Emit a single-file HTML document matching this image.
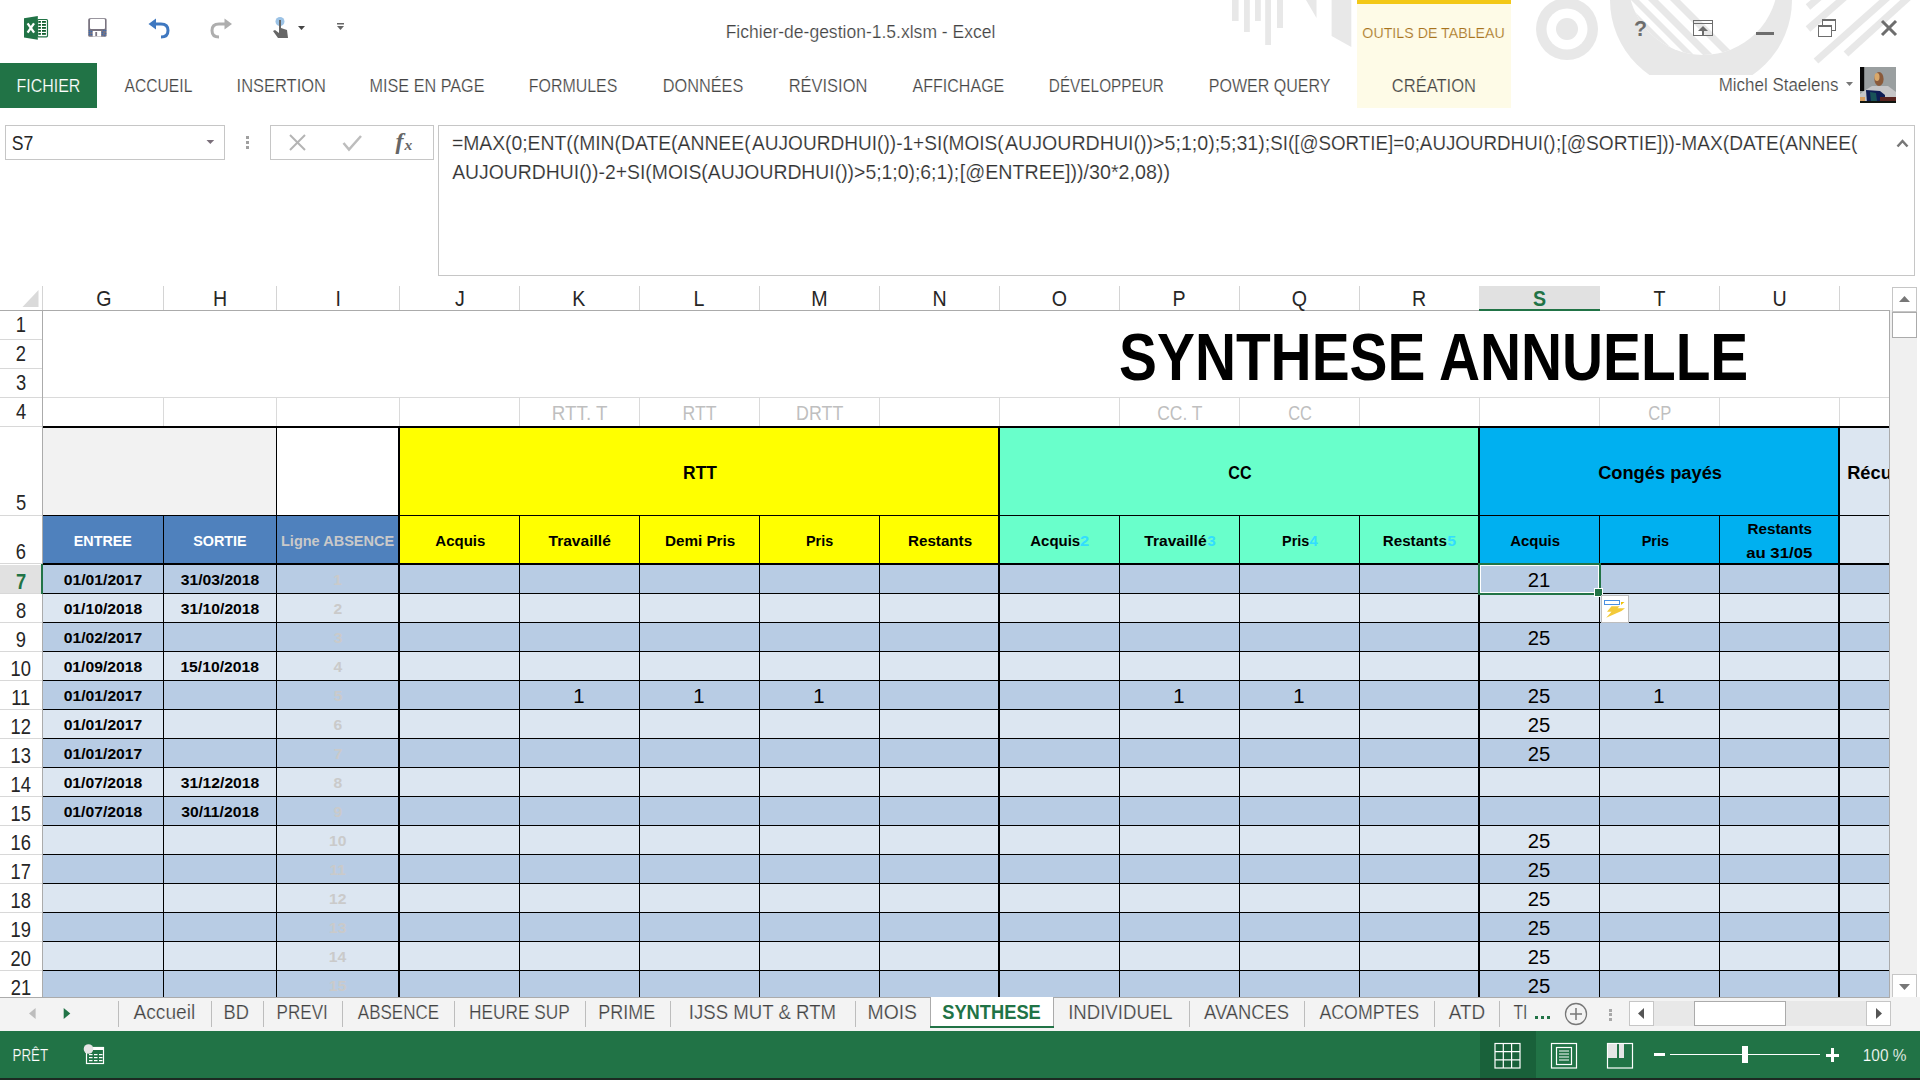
<!DOCTYPE html>
<html lang="fr"><head><meta charset="utf-8"><title>Fichier-de-gestion-1.5.xlsm - Excel</title>
<style>
html,body{margin:0;padding:0;background:#fff;}
body{width:1920px;height:1080px;overflow:hidden;position:relative;font-family:"Liberation Sans",sans-serif;}
svg{position:absolute;left:0;top:0;display:block}
</style></head>
<body>
<svg width="1920" height="1080" viewBox="0 0 1920 1080">
<rect x="1232" y="0" width="6.6" height="21" fill="#E8E8E8"/>
<rect x="1244" y="0" width="5.8" height="32" fill="#E8E8E8"/>
<rect x="1255" y="0" width="5.8" height="21" fill="#E8E8E8"/>
<rect x="1265.2" y="0" width="5.8" height="45" fill="#E8E8E8"/>
<rect x="1277" y="0" width="6.0" height="28" fill="#E8E8E8"/>
<polygon points="1306,0 1316.5,0 1316.5,18" fill="#E8E8E8"/>
<polygon points="1331.6,0 1351.3,0 1351.3,47 1331.6,36" fill="#E8E8E8"/>
<circle cx="1567" cy="29" r="31" fill="#E8E8E8"/><circle cx="1567" cy="29" r="20.5" fill="#fff"/><circle cx="1567" cy="29" r="11" fill="#E8E8E8"/>
<clipPath id="cl75"><rect x="0" y="0" width="1920" height="75"/></clipPath>
<clipPath id="inner"><circle cx="1703" cy="-20" r="75"/></clipPath>
<g clip-path="url(#cl75)"><circle cx="1701" cy="0" r="91" fill="#E8E8E8"/><circle cx="1703" cy="-20" r="75" fill="#fff"/><g clip-path="url(#inner)"><polygon points="1300,-100 1523,-100 1723,100 1500,100" fill="#E8E8E8"/><polygon points="1531,-100 1539,-100 1739,100 1731,100" fill="#E8E8E8"/><polygon points="1548,-100 1558,-100 1758,100 1748,100" fill="#E8E8E8"/><polygon points="1570,-100 1580,-100 1780,100 1770,100" fill="#E8E8E8"/></g></g>
<g stroke="#E8E8E8" stroke-width="7"><line x1="1808" y1="7" x2="1822" y2="-5"/><line x1="1808" y1="29" x2="1846" y2="-4"/><line x1="1816" y1="61" x2="1888" y2="-3"/><line x1="1846" y1="54" x2="1910" y2="-4"/></g>
<rect x="1357" y="0" width="154" height="108" fill="#FEFBE7" shape-rendering="crispEdges" />
<rect x="1357" y="0" width="154" height="4" fill="#F3C817" shape-rendering="crispEdges" />
<rect x="0" y="63" width="97" height="45" fill="#217346" shape-rendering="crispEdges" />
<g><rect x="1860" y="67" width="36" height="36" fill="#9A9FA0"/><rect x="1860" y="67" width="4.2" height="24" fill="#080808"/><path d="M1864 91 L1872 86 L1888 86 L1896 92 L1896 103 L1860 103 L1860 94 Z" fill="#C6C6C8"/><ellipse cx="1879" cy="79" rx="4.6" ry="7" fill="#8A5A3A"/><ellipse cx="1877" cy="77" rx="2.5" ry="4" fill="#D9A86A"/><polygon points="1866,90 1880,91 1885,95 1885,103 1867,103" fill="#0E1D55"/><polygon points="1870,92 1876,93 1877,101 1871,101" fill="#1C6A5A" opacity="0.7"/><rect x="1880" y="97" width="16" height="6" fill="#5A2420"/><rect x="1860" y="97" width="5" height="4" fill="#D9A060"/><rect x="1860" y="101" width="36" height="2" fill="#101510"/></g>
<polygon points="1846,82 1853,82 1849.5,86" fill="#777"/>
<text x="1634" y="36" font-size="22.5" font-weight="bold" fill="#6D6D6D" transform="translate(1634 0) scale(0.95 1) translate(-1634 0)">?</text>
<g fill="none" stroke="#6D6D6D" stroke-width="1"><rect x="1693.5" y="20.5" width="19" height="15"/><line x1="1693.5" y1="23.5" x2="1712.5" y2="23.5"/></g><g fill="#6D6D6D"><rect x="1702" y="27" width="2" height="9"/><polygon points="1698,31 1703,26 1708,31"/></g>
<rect x="1756" y="32" width="18" height="3" fill="#6D6D6D" shape-rendering="crispEdges" />
<g fill="none" stroke="#6D6D6D" stroke-width="1"><rect x="1822.5" y="19.5" width="13" height="11"/><rect x="1818.5" y="25.5" width="13" height="11" fill="#fff"/></g><rect x="1822" y="19" width="14" height="2" fill="#6D6D6D"/><rect x="1818" y="25" width="14" height="2" fill="#6D6D6D"/>
<g stroke="#6D6D6D" stroke-width="3"><line x1="1882" y1="21" x2="1896" y2="35"/><line x1="1896" y1="21" x2="1882" y2="35"/></g>
<g><rect x="37.5" y="19.5" width="10" height="17.3" rx="1" fill="#fff" stroke="#217346" stroke-width="1.2"/><rect x="38.3" y="21" width="2.6" height="1.8" fill="#0E5C2C"/><rect x="42" y="21" width="3.9" height="1.8" fill="#0E5C2C"/><rect x="38.3" y="24" width="2.6" height="1.8" fill="#0E5C2C"/><rect x="42" y="24" width="3.9" height="1.8" fill="#0E5C2C"/><rect x="38.3" y="27" width="2.6" height="1.8" fill="#0E5C2C"/><rect x="42" y="27" width="3.9" height="1.8" fill="#0E5C2C"/><rect x="38.3" y="30" width="2.6" height="1.8" fill="#0E5C2C"/><rect x="42" y="30" width="3.9" height="1.8" fill="#0E5C2C"/><rect x="38.3" y="33" width="2.6" height="1.8" fill="#0E5C2C"/><rect x="42" y="33" width="3.9" height="1.8" fill="#0E5C2C"/><polygon points="24,18.2 37.8,16 37.8,39.7 24,37.5" fill="#217346"/><path d="M27.6 23.4 L34.1 32.7 M34 23.4 L27.6 32.7" stroke="#fff" stroke-width="2.3"/></g>
<g><rect x="88.2" y="18.2" width="18.4" height="18.6" rx="1.5" fill="#7A7480"/><rect x="90" y="19" width="15" height="10" rx="1" fill="#fff"/><rect x="92.7" y="31" width="8.4" height="5.5" fill="#fff"/><rect x="95.3" y="32" width="1.8" height="4" fill="#7A7480"/><circle cx="89.5" cy="30.5" r="0.8" fill="#3A6AB0"/><circle cx="89.5" cy="32.5" r="0.8" fill="#3A6AB0"/><circle cx="89.5" cy="34.5" r="0.8" fill="#3A6AB0"/><circle cx="91.5" cy="31.5" r="0.8" fill="#3A6AB0"/><circle cx="91.5" cy="34.5" r="0.8" fill="#3A6AB0"/><circle cx="103.5" cy="30.5" r="0.8" fill="#3A6AB0"/><circle cx="105.5" cy="30.5" r="0.8" fill="#3A6AB0"/><circle cx="102.5" cy="32.5" r="0.8" fill="#3A6AB0"/><circle cx="102.5" cy="34.5" r="0.8" fill="#3A6AB0"/><circle cx="105.5" cy="33.5" r="0.8" fill="#3A6AB0"/><circle cx="104.5" cy="35.5" r="0.8" fill="#3A6AB0"/></g>
<g fill="none" stroke="#3F78C0" stroke-width="3"><path d="M152 24 L161 24 Q168 24 168 30.5 Q168 37 161 37"/></g><polygon points="148.5,24 156,18.5 156,29.5" fill="#3F78C0"/>
<g fill="none" stroke="#AEAEAE" stroke-width="3"><path d="M228 24 L219 24 Q212 24 212 30.5 Q212 37 219 37"/></g><polygon points="232,24 224.5,18.5 224.5,29.5" fill="#AEAEAE"/>
<circle cx="280" cy="21.5" r="4.5" fill="#9CC3E6"/><path d="M279 20 L281 20 L281 28 L287 30 L288 38 L278 38 L273 31 L275 30 L279 33 Z" fill="#666"/><polygon points="298,26 305,26 301.5,30" fill="#444"/>
<rect x="337" y="23" width="7" height="1.5" fill="#666"/><polygon points="337,26 344,26 340.5,30" fill="#666"/>
<rect x="5.5" y="125.5" width="219" height="34" fill="#fff" stroke="#C6C6C6"/>
<polygon points="206.5,140 214.2,140 210.3,144" fill="#7A6F7A"/>
<rect x="245.8" y="136" width="3" height="3" fill="#A0A0A0" shape-rendering="crispEdges" />
<rect x="245.8" y="141" width="3" height="3" fill="#A0A0A0" shape-rendering="crispEdges" />
<rect x="245.8" y="146" width="3" height="3" fill="#A0A0A0" shape-rendering="crispEdges" />
<rect x="270.5" y="125.5" width="163" height="34" fill="#fff" stroke="#C6C6C6"/>
<g stroke="#B4B4B4" stroke-width="2"><line x1="290" y1="135" x2="305" y2="150"/><line x1="305" y1="135" x2="290" y2="150"/></g>
<path d="M343.5 143 L349 149.5 L361 136" fill="none" stroke="#BDBDBD" stroke-width="2.5"/>
<text x="395.5" y="149" font-family="Liberation Serif" font-style="italic" font-weight="bold" font-size="24" fill="#666">f</text><text x="404.5" y="150" font-family="Liberation Serif" font-style="italic" font-weight="bold" font-size="15.5" fill="#666">x</text>
<rect x="438.5" y="125.5" width="1476" height="150" fill="#fff" stroke="#C6C6C6"/>
<path d="M1897.5 146.5 L1902.5 141 L1907.5 146.5" fill="none" stroke="#777" stroke-width="2.5"/>
<rect x="42" y="286" width="1" height="24" fill="#D4D4D4" shape-rendering="crispEdges" />
<rect x="163" y="286" width="1" height="24" fill="#D4D4D4" shape-rendering="crispEdges" />
<rect x="276" y="286" width="1" height="24" fill="#D4D4D4" shape-rendering="crispEdges" />
<rect x="399" y="286" width="1" height="24" fill="#D4D4D4" shape-rendering="crispEdges" />
<rect x="519" y="286" width="1" height="24" fill="#D4D4D4" shape-rendering="crispEdges" />
<rect x="639" y="286" width="1" height="24" fill="#D4D4D4" shape-rendering="crispEdges" />
<rect x="759" y="286" width="1" height="24" fill="#D4D4D4" shape-rendering="crispEdges" />
<rect x="879" y="286" width="1" height="24" fill="#D4D4D4" shape-rendering="crispEdges" />
<rect x="999" y="286" width="1" height="24" fill="#D4D4D4" shape-rendering="crispEdges" />
<rect x="1119" y="286" width="1" height="24" fill="#D4D4D4" shape-rendering="crispEdges" />
<rect x="1239" y="286" width="1" height="24" fill="#D4D4D4" shape-rendering="crispEdges" />
<rect x="1359" y="286" width="1" height="24" fill="#D4D4D4" shape-rendering="crispEdges" />
<rect x="1479" y="286" width="1" height="24" fill="#D4D4D4" shape-rendering="crispEdges" />
<rect x="1599" y="286" width="1" height="24" fill="#D4D4D4" shape-rendering="crispEdges" />
<rect x="1719" y="286" width="1" height="24" fill="#D4D4D4" shape-rendering="crispEdges" />
<rect x="1839" y="286" width="1" height="24" fill="#D4D4D4" shape-rendering="crispEdges" />
<rect x="1839" y="286" width="1" height="24" fill="#D4D4D4" shape-rendering="crispEdges" />
<rect x="0" y="310" width="1890" height="1" fill="#ABABAB" shape-rendering="crispEdges" />
<rect x="1479" y="286" width="121" height="25" fill="#E1E1E1" shape-rendering="crispEdges" />
<rect x="1479" y="309" width="121" height="2" fill="#217346" shape-rendering="crispEdges" />
<polygon points="38.5,290 38.5,307 22.5,307" fill="#DADADA"/>
<rect x="42" y="310" width="1" height="687" fill="#ABABAB" shape-rendering="crispEdges" />
<rect x="0" y="339" width="42" height="1" fill="#D8D8D8" shape-rendering="crispEdges" />
<rect x="0" y="368" width="42" height="1" fill="#D8D8D8" shape-rendering="crispEdges" />
<rect x="0" y="397" width="42" height="1" fill="#D8D8D8" shape-rendering="crispEdges" />
<rect x="0" y="426" width="42" height="1" fill="#D8D8D8" shape-rendering="crispEdges" />
<rect x="0" y="515" width="42" height="1" fill="#D8D8D8" shape-rendering="crispEdges" />
<rect x="0" y="563" width="42" height="1" fill="#D8D8D8" shape-rendering="crispEdges" />
<rect x="0" y="593" width="42" height="1" fill="#D8D8D8" shape-rendering="crispEdges" />
<rect x="0" y="622" width="42" height="1" fill="#D8D8D8" shape-rendering="crispEdges" />
<rect x="0" y="651" width="42" height="1" fill="#D8D8D8" shape-rendering="crispEdges" />
<rect x="0" y="680" width="42" height="1" fill="#D8D8D8" shape-rendering="crispEdges" />
<rect x="0" y="709" width="42" height="1" fill="#D8D8D8" shape-rendering="crispEdges" />
<rect x="0" y="738" width="42" height="1" fill="#D8D8D8" shape-rendering="crispEdges" />
<rect x="0" y="767" width="42" height="1" fill="#D8D8D8" shape-rendering="crispEdges" />
<rect x="0" y="796" width="42" height="1" fill="#D8D8D8" shape-rendering="crispEdges" />
<rect x="0" y="825" width="42" height="1" fill="#D8D8D8" shape-rendering="crispEdges" />
<rect x="0" y="854" width="42" height="1" fill="#D8D8D8" shape-rendering="crispEdges" />
<rect x="0" y="883" width="42" height="1" fill="#D8D8D8" shape-rendering="crispEdges" />
<rect x="0" y="912" width="42" height="1" fill="#D8D8D8" shape-rendering="crispEdges" />
<rect x="0" y="941" width="42" height="1" fill="#D8D8D8" shape-rendering="crispEdges" />
<rect x="0" y="970" width="42" height="1" fill="#D8D8D8" shape-rendering="crispEdges" />
<rect x="0" y="999" width="42" height="1" fill="#D8D8D8" shape-rendering="crispEdges" />
<rect x="0" y="565" width="41" height="28" fill="#E1E1E1" shape-rendering="crispEdges" />
<rect x="41" y="564" width="2" height="30" fill="#217346" shape-rendering="crispEdges" />
<rect x="43" y="397" width="1846" height="1" fill="#DADADA" shape-rendering="crispEdges" />
<rect x="163" y="398" width="1" height="28" fill="#DADADA" shape-rendering="crispEdges" />
<rect x="276" y="398" width="1" height="28" fill="#DADADA" shape-rendering="crispEdges" />
<rect x="399" y="398" width="1" height="28" fill="#DADADA" shape-rendering="crispEdges" />
<rect x="519" y="398" width="1" height="28" fill="#DADADA" shape-rendering="crispEdges" />
<rect x="639" y="398" width="1" height="28" fill="#DADADA" shape-rendering="crispEdges" />
<rect x="759" y="398" width="1" height="28" fill="#DADADA" shape-rendering="crispEdges" />
<rect x="879" y="398" width="1" height="28" fill="#DADADA" shape-rendering="crispEdges" />
<rect x="999" y="398" width="1" height="28" fill="#DADADA" shape-rendering="crispEdges" />
<rect x="1119" y="398" width="1" height="28" fill="#DADADA" shape-rendering="crispEdges" />
<rect x="1239" y="398" width="1" height="28" fill="#DADADA" shape-rendering="crispEdges" />
<rect x="1359" y="398" width="1" height="28" fill="#DADADA" shape-rendering="crispEdges" />
<rect x="1479" y="398" width="1" height="28" fill="#DADADA" shape-rendering="crispEdges" />
<rect x="1599" y="398" width="1" height="28" fill="#DADADA" shape-rendering="crispEdges" />
<rect x="1719" y="398" width="1" height="28" fill="#DADADA" shape-rendering="crispEdges" />
<rect x="1839" y="398" width="1" height="28" fill="#DADADA" shape-rendering="crispEdges" />
<rect x="1839" y="398" width="1" height="28" fill="#DADADA" shape-rendering="crispEdges" />
<rect x="43" y="428" width="233" height="87" fill="#F2F2F2" shape-rendering="crispEdges" />
<rect x="277" y="428" width="121" height="87" fill="#FFFFFF" shape-rendering="crispEdges" />
<rect x="400" y="428" width="598" height="87" fill="#FFFF00" shape-rendering="crispEdges" />
<rect x="1000" y="428" width="478" height="87" fill="#69FFCB" shape-rendering="crispEdges" />
<rect x="1480" y="428" width="358" height="87" fill="#00B0F0" shape-rendering="crispEdges" />
<rect x="1840" y="428" width="49" height="87" fill="#DCE6F1" shape-rendering="crispEdges" />
<rect x="43" y="516" width="355" height="47" fill="#4F81BD" shape-rendering="crispEdges" />
<rect x="400" y="516" width="598" height="47" fill="#FFFF00" shape-rendering="crispEdges" />
<rect x="1000" y="516" width="478" height="47" fill="#69FFCB" shape-rendering="crispEdges" />
<rect x="1480" y="516" width="358" height="47" fill="#00B0F0" shape-rendering="crispEdges" />
<rect x="1840" y="516" width="49" height="47" fill="#DCE6F1" shape-rendering="crispEdges" />
<rect x="43" y="565" width="1846" height="28" fill="#B8CCE4" shape-rendering="crispEdges" />
<rect x="43" y="594" width="1846" height="28" fill="#DCE6F1" shape-rendering="crispEdges" />
<rect x="43" y="623" width="1846" height="28" fill="#B8CCE4" shape-rendering="crispEdges" />
<rect x="43" y="652" width="1846" height="28" fill="#DCE6F1" shape-rendering="crispEdges" />
<rect x="43" y="681" width="1846" height="28" fill="#B8CCE4" shape-rendering="crispEdges" />
<rect x="43" y="710" width="1846" height="28" fill="#DCE6F1" shape-rendering="crispEdges" />
<rect x="43" y="739" width="1846" height="28" fill="#B8CCE4" shape-rendering="crispEdges" />
<rect x="43" y="768" width="1846" height="28" fill="#DCE6F1" shape-rendering="crispEdges" />
<rect x="43" y="797" width="1846" height="28" fill="#B8CCE4" shape-rendering="crispEdges" />
<rect x="43" y="826" width="1846" height="28" fill="#DCE6F1" shape-rendering="crispEdges" />
<rect x="43" y="855" width="1846" height="28" fill="#B8CCE4" shape-rendering="crispEdges" />
<rect x="43" y="884" width="1846" height="28" fill="#DCE6F1" shape-rendering="crispEdges" />
<rect x="43" y="913" width="1846" height="28" fill="#B8CCE4" shape-rendering="crispEdges" />
<rect x="43" y="942" width="1846" height="28" fill="#DCE6F1" shape-rendering="crispEdges" />
<rect x="43" y="971" width="1846" height="28" fill="#B8CCE4" shape-rendering="crispEdges" />
<rect x="43" y="426" width="1846" height="2" fill="#000" shape-rendering="crispEdges" />
<rect x="43" y="515" width="1846" height="1" fill="#000" shape-rendering="crispEdges" />
<rect x="43" y="563" width="1846" height="2" fill="#000" shape-rendering="crispEdges" />
<rect x="43" y="593" width="1846" height="1" fill="#000" shape-rendering="crispEdges" />
<rect x="43" y="622" width="1846" height="1" fill="#000" shape-rendering="crispEdges" />
<rect x="43" y="651" width="1846" height="1" fill="#000" shape-rendering="crispEdges" />
<rect x="43" y="680" width="1846" height="1" fill="#000" shape-rendering="crispEdges" />
<rect x="43" y="709" width="1846" height="1" fill="#000" shape-rendering="crispEdges" />
<rect x="43" y="738" width="1846" height="1" fill="#000" shape-rendering="crispEdges" />
<rect x="43" y="767" width="1846" height="1" fill="#000" shape-rendering="crispEdges" />
<rect x="43" y="796" width="1846" height="1" fill="#000" shape-rendering="crispEdges" />
<rect x="43" y="825" width="1846" height="1" fill="#000" shape-rendering="crispEdges" />
<rect x="43" y="854" width="1846" height="1" fill="#000" shape-rendering="crispEdges" />
<rect x="43" y="883" width="1846" height="1" fill="#000" shape-rendering="crispEdges" />
<rect x="43" y="912" width="1846" height="1" fill="#000" shape-rendering="crispEdges" />
<rect x="43" y="941" width="1846" height="1" fill="#000" shape-rendering="crispEdges" />
<rect x="43" y="970" width="1846" height="1" fill="#000" shape-rendering="crispEdges" />
<rect x="163" y="516" width="1" height="481" fill="#000" shape-rendering="crispEdges" />
<rect x="276" y="426" width="1" height="571" fill="#000" shape-rendering="crispEdges" />
<rect x="398" y="426" width="2" height="571" fill="#000" shape-rendering="crispEdges" />
<rect x="519" y="516" width="1" height="481" fill="#000" shape-rendering="crispEdges" />
<rect x="639" y="516" width="1" height="481" fill="#000" shape-rendering="crispEdges" />
<rect x="759" y="516" width="1" height="481" fill="#000" shape-rendering="crispEdges" />
<rect x="879" y="516" width="1" height="481" fill="#000" shape-rendering="crispEdges" />
<rect x="998" y="426" width="2" height="571" fill="#000" shape-rendering="crispEdges" />
<rect x="1119" y="516" width="1" height="481" fill="#000" shape-rendering="crispEdges" />
<rect x="1239" y="516" width="1" height="481" fill="#000" shape-rendering="crispEdges" />
<rect x="1359" y="516" width="1" height="481" fill="#000" shape-rendering="crispEdges" />
<rect x="1478" y="426" width="2" height="571" fill="#000" shape-rendering="crispEdges" />
<rect x="1599" y="516" width="1" height="481" fill="#000" shape-rendering="crispEdges" />
<rect x="1719" y="516" width="1" height="481" fill="#000" shape-rendering="crispEdges" />
<rect x="1838" y="426" width="2" height="571" fill="#000" shape-rendering="crispEdges" />
<rect x="1889" y="310" width="1" height="687" fill="#ABABAB" shape-rendering="crispEdges" />
<clipPath id="gridclip" clipPathUnits="userSpaceOnUse"><rect x="43" y="311" width="1846" height="686"/></clipPath>
<g font-family="Liberation Sans">
<g><text transform="translate(725.63 38.00) scale(0.9339 1)" font-size="18.78" fill="#444" stroke="#fff" stroke-width="0.22">Fichier-de-gestion-1.5.xlsm - Excel</text>
<text transform="translate(1362.33 37.80) scale(0.9265 1)" font-size="15.36" fill="#A8731C" stroke="#FEFBE7" stroke-width="0.2">OUTILS DE TABLEAU</text>
<text transform="translate(16.55 92.00) scale(0.8639 1)" font-size="18.49" fill="#fff" stroke="#217346" stroke-width="0.2">FICHIER</text>
<text transform="translate(124.60 92.00) scale(0.8457 1)" font-size="18.49" fill="#444" stroke="#fff" stroke-width="0.22">ACCUEIL</text>
<text transform="translate(236.61 92.00) scale(0.8901 1)" font-size="18.49" fill="#444" stroke="#fff" stroke-width="0.22">INSERTION</text>
<text transform="translate(369.53 92.00) scale(0.8777 1)" font-size="18.49" fill="#444" stroke="#fff" stroke-width="0.22">MISE EN PAGE</text>
<text transform="translate(528.75 92.00) scale(0.8625 1)" font-size="18.49" fill="#444" stroke="#fff" stroke-width="0.22">FORMULES</text>
<text transform="translate(662.73 92.00) scale(0.8820 1)" font-size="18.49" fill="#444" stroke="#fff" stroke-width="0.22">DONNÉES</text>
<text transform="translate(788.71 92.00) scale(0.8897 1)" font-size="18.49" fill="#444" stroke="#fff" stroke-width="0.22">RÉVISION</text>
<text transform="translate(912.50 92.00) scale(0.8687 1)" font-size="18.49" fill="#444" stroke="#fff" stroke-width="0.22">AFFICHAGE</text>
<text transform="translate(1048.80 92.00) scale(0.8306 1)" font-size="18.49" fill="#444" stroke="#fff" stroke-width="0.22">DÉVELOPPEUR</text>
<text transform="translate(1208.75 92.00) scale(0.8683 1)" font-size="18.49" fill="#444" stroke="#fff" stroke-width="0.22">POWER QUERY</text>
<text transform="translate(1391.82 92.00) scale(0.8943 1)" font-size="18.49" fill="#444" stroke="#FEFBE7" stroke-width="0.22">CRÉATION</text>
<text transform="translate(1718.67 90.75) scale(0.9511 1)" font-size="17.85" fill="#444" stroke="#fff" stroke-width="0.22">Michel Staelens</text>
<text transform="translate(11.65 150.00) scale(0.8853 1)" font-size="19.91" fill="#262626">S7</text>
<text transform="translate(451.89 149.90) scale(0.9856 1)" font-size="19.63" fill="#333" stroke="#fff" stroke-width="0.15">=MAX(0;ENT((MIN(DATE(ANNEE(</text>
<text transform="translate(752.10 149.90) scale(0.9720 1)" font-size="19.63" fill="#333" stroke="#fff" stroke-width="0.15">AUJOURDHUI())-1+SI(MOIS(</text>
<text transform="translate(1005.00 149.90) scale(0.9993 1)" font-size="19.63" fill="#333" stroke="#fff" stroke-width="0.15">AUJOURDHUI())&gt;5;1;0);5;31);</text>
<text transform="translate(1270.21 149.90) scale(0.9568 1)" font-size="19.63" fill="#333" stroke="#fff" stroke-width="0.15">SI([@SORTIE]=0;AUJOURDHUI()</text>
<text transform="translate(1556.00 149.90) scale(0.9754 1)" font-size="19.63" fill="#333" stroke="#fff" stroke-width="0.15">;[@SORTIE]))-MAX(DATE(ANNEE(</text>
<text transform="translate(452.20 178.90) scale(0.9945 1)" font-size="19.49" fill="#333" stroke="#fff" stroke-width="0.15">AUJOURDHUI())-2+SI(MOIS(AUJOURDHUI())&gt;5;1;0);6;1);</text>
<text transform="translate(959.77 178.90) scale(1.0097 1)" font-size="19.49" fill="#333" stroke="#fff" stroke-width="0.15">[@ENTREE]))/30*2,08))</text>
<text transform="translate(96.14 306.00) scale(0.9200 1)" font-size="21.34" fill="#262626">G</text>
<text transform="translate(212.95 306.00) scale(0.9200 1)" font-size="21.34" fill="#262626">H</text>
<text transform="translate(335.39 306.00) scale(0.9200 1)" font-size="21.34" fill="#262626">I</text>
<text transform="translate(455.05 306.00) scale(0.9200 1)" font-size="21.34" fill="#262626">J</text>
<text transform="translate(572.29 306.00) scale(0.9200 1)" font-size="21.34" fill="#262626">K</text>
<text transform="translate(693.52 306.00) scale(0.9200 1)" font-size="21.34" fill="#262626">L</text>
<text transform="translate(811.22 306.00) scale(0.9200 1)" font-size="21.34" fill="#262626">M</text>
<text transform="translate(932.45 306.00) scale(0.9200 1)" font-size="21.34" fill="#262626">N</text>
<text transform="translate(1051.83 306.00) scale(0.9200 1)" font-size="21.34" fill="#262626">O</text>
<text transform="translate(1172.60 306.00) scale(0.9200 1)" font-size="21.34" fill="#262626">P</text>
<text transform="translate(1291.83 306.00) scale(0.9200 1)" font-size="21.34" fill="#262626">Q</text>
<text transform="translate(1411.99 306.00) scale(0.9200 1)" font-size="21.34" fill="#262626">R</text>
<text transform="translate(1533.06 306.00) scale(0.9200 1)" font-size="21.34" font-weight="bold" fill="#217346">S</text>
<text transform="translate(1653.52 306.00) scale(0.9200 1)" font-size="21.34" fill="#262626">T</text>
<text transform="translate(1772.45 306.00) scale(0.9200 1)" font-size="21.34" fill="#262626">U</text>
<text transform="translate(15.70 332.40) scale(0.8600 1)" font-size="21.34" fill="#262626">1</text>
<text transform="translate(15.84 361.40) scale(0.8600 1)" font-size="21.34" fill="#262626">2</text>
<text transform="translate(15.98 390.40) scale(0.8600 1)" font-size="21.34" fill="#262626">3</text>
<text transform="translate(15.98 419.40) scale(0.8600 1)" font-size="21.34" fill="#262626">4</text>
<text transform="translate(15.98 509.80) scale(0.8600 1)" font-size="21.34" fill="#262626">5</text>
<text transform="translate(15.84 558.60) scale(0.8600 1)" font-size="21.34" fill="#262626">6</text>
<text transform="translate(15.98 588.60) scale(0.8600 1)" font-size="21.34" font-weight="bold" fill="#217346">7</text>
<text transform="translate(15.98 617.60) scale(0.8600 1)" font-size="21.34" fill="#262626">8</text>
<text transform="translate(15.84 646.60) scale(0.8600 1)" font-size="21.34" fill="#262626">9</text>
<text transform="translate(10.45 675.60) scale(0.8600 1)" font-size="21.34" fill="#262626">10</text>
<text transform="translate(11.27 704.60) scale(0.8600 1)" font-size="21.34" fill="#262626">11</text>
<text transform="translate(10.59 733.60) scale(0.8600 1)" font-size="21.34" fill="#262626">12</text>
<text transform="translate(10.59 762.60) scale(0.8600 1)" font-size="21.34" fill="#262626">13</text>
<text transform="translate(10.45 791.60) scale(0.8600 1)" font-size="21.34" fill="#262626">14</text>
<text transform="translate(10.59 820.60) scale(0.8600 1)" font-size="21.34" fill="#262626">15</text>
<text transform="translate(10.59 849.60) scale(0.8600 1)" font-size="21.34" fill="#262626">16</text>
<text transform="translate(10.59 878.60) scale(0.8600 1)" font-size="21.34" fill="#262626">17</text>
<text transform="translate(10.59 907.60) scale(0.8600 1)" font-size="21.34" fill="#262626">18</text>
<text transform="translate(10.59 936.60) scale(0.8600 1)" font-size="21.34" fill="#262626">19</text>
<text transform="translate(10.59 965.60) scale(0.8600 1)" font-size="21.34" fill="#262626">20</text>
<text transform="translate(10.74 994.60) scale(0.8600 1)" font-size="21.34" fill="#262626">21</text>
<text transform="translate(1119.11 380.00) scale(0.8636 1)" font-size="65.79" font-weight="bold" fill="#000">SYNTHESE ANNUELLE</text>
<text transform="translate(551.83 420.00) scale(0.9636 1)" font-size="19.49" fill="#BFBFBF">RTT. T</text>
<text transform="translate(682.62 420.00) scale(0.9054 1)" font-size="19.49" fill="#BFBFBF">RTT</text>
<text transform="translate(796.11 420.00) scale(0.9146 1)" font-size="19.49" fill="#BFBFBF">DRTT</text>
<text transform="translate(1157.18 420.00) scale(0.8966 1)" font-size="19.49" fill="#BFBFBF">CC. T</text>
<text transform="translate(1288.23 420.00) scale(0.8434 1)" font-size="19.49" fill="#BFBFBF">CC</text>
<text transform="translate(1648.22 420.00) scale(0.8524 1)" font-size="19.49" fill="#BFBFBF">CP</text>
<text transform="translate(683.11 478.75) scale(0.9025 1)" font-size="19.27" font-weight="bold" fill="#000">RTT</text>
<text transform="translate(1228.25 478.75) scale(0.9077 1)" font-size="17.78" font-weight="bold" fill="#000">CC</text>
<text transform="translate(1598.13 478.70) scale(0.9588 1)" font-size="19.06" font-weight="bold" fill="#000">Congés payés</text>
<g clip-path="url(#gridclip)"><text transform="translate(1847.16 478.70) scale(0.9588 1)" font-size="19.06" font-weight="bold" fill="#000">Récupération</text></g>
<text transform="translate(73.81 545.60) scale(0.9772 1)" font-size="14.65" font-weight="bold" fill="#fff">ENTREE</text>
<text transform="translate(193.18 545.60) scale(0.9810 1)" font-size="14.65" font-weight="bold" fill="#fff">SORTIE</text>
<text transform="translate(280.99 545.60) scale(0.9914 1)" font-size="14.65" font-weight="bold" fill="#C9C9C9">Ligne ABSENCE</text>
<text transform="translate(435.37 545.80) scale(1.0039 1)" font-size="14.94" font-weight="bold" fill="#000">Acquis</text>
<text transform="translate(548.50 545.80) scale(1.0418 1)" font-size="14.94" font-weight="bold" fill="#000">Travaillé</text>
<text transform="translate(664.95 545.80) scale(1.0213 1)" font-size="14.94" font-weight="bold" fill="#000">Demi Pris</text>
<text transform="translate(806.00 545.80) scale(0.9628 1)" font-size="14.94" font-weight="bold" fill="#000">Pris</text>
<text transform="translate(908.05 545.80) scale(1.0155 1)" font-size="14.94" font-weight="bold" fill="#000">Restants</text>
<text transform="translate(1030.27 545.80) scale(1.0029 1)" font-size="14.94" font-weight="bold" fill="#000">Acquis</text>
<text transform="translate(1144.30 545.80) scale(1.0418 1)" font-size="14.94" font-weight="bold" fill="#000">Travaillé</text>
<text transform="translate(1282.00 545.80) scale(0.9666 1)" font-size="14.94" font-weight="bold" fill="#000">Pris</text>
<text transform="translate(1382.80 545.80) scale(1.0147 1)" font-size="14.94" font-weight="bold" fill="#000">Restants</text>
<text transform="translate(1510.17 545.80) scale(1.0009 1)" font-size="14.94" font-weight="bold" fill="#000">Acquis</text>
<text transform="translate(1641.69 545.80) scale(0.9703 1)" font-size="14.94" font-weight="bold" fill="#000">Pris</text>
<text transform="translate(1079.98 545.80) scale(1.1047 1)" font-size="14.94" font-weight="bold" fill="#33DDFF">2</text>
<text transform="translate(1207.26 545.80) scale(1.0258 1)" font-size="14.94" font-weight="bold" fill="#33DDFF">3</text>
<text transform="translate(1309.50 545.80) scale(0.9998 1)" font-size="14.94" font-weight="bold" fill="#33DDFF">4</text>
<text transform="translate(1447.25 545.80) scale(1.0647 1)" font-size="14.94" font-weight="bold" fill="#33DDFF">5</text>
<text transform="translate(1747.55 533.80) scale(1.0840 1)" font-size="14.08" font-weight="bold" fill="#000">Restants</text>
<text transform="translate(1746.14 557.50) scale(1.1136 1)" font-size="15.08" font-weight="bold" fill="#000">au 31/05</text>
<text transform="translate(63.76 585.00) scale(1.1044 1)" font-size="14.22" font-weight="bold" fill="#000">01/01/2017</text>
<text transform="translate(180.76 585.00) scale(1.1044 1)" font-size="14.22" font-weight="bold" fill="#000">31/03/2018</text>
<text transform="translate(63.64 614.00) scale(1.1044 1)" font-size="14.22" font-weight="bold" fill="#000">01/10/2018</text>
<text transform="translate(180.76 614.00) scale(1.1044 1)" font-size="14.22" font-weight="bold" fill="#000">31/10/2018</text>
<text transform="translate(63.76 643.00) scale(1.1044 1)" font-size="14.22" font-weight="bold" fill="#000">01/02/2017</text>
<text transform="translate(63.64 672.00) scale(1.1044 1)" font-size="14.22" font-weight="bold" fill="#000">01/09/2018</text>
<text transform="translate(180.39 672.00) scale(1.1044 1)" font-size="14.22" font-weight="bold" fill="#000">15/10/2018</text>
<text transform="translate(63.76 701.00) scale(1.1044 1)" font-size="14.22" font-weight="bold" fill="#000">01/01/2017</text>
<text transform="translate(63.76 730.00) scale(1.1044 1)" font-size="14.22" font-weight="bold" fill="#000">01/01/2017</text>
<text transform="translate(63.76 759.00) scale(1.1044 1)" font-size="14.22" font-weight="bold" fill="#000">01/01/2017</text>
<text transform="translate(63.64 788.00) scale(1.1044 1)" font-size="14.22" font-weight="bold" fill="#000">01/07/2018</text>
<text transform="translate(180.76 788.00) scale(1.1044 1)" font-size="14.22" font-weight="bold" fill="#000">31/12/2018</text>
<text transform="translate(63.64 817.00) scale(1.1044 1)" font-size="14.22" font-weight="bold" fill="#000">01/07/2018</text>
<text transform="translate(181.19 817.00) scale(1.1044 1)" font-size="14.22" font-weight="bold" fill="#000">30/11/2018</text>
<text transform="translate(333.34 585.00) scale(1.1044 1)" font-size="14.22" font-weight="bold" fill="#CACACA">1</text>
<text transform="translate(333.58 614.00) scale(1.1044 1)" font-size="14.22" font-weight="bold" fill="#CACACA">2</text>
<text transform="translate(333.70 643.00) scale(1.1044 1)" font-size="14.22" font-weight="bold" fill="#CACACA">3</text>
<text transform="translate(333.58 672.00) scale(1.1044 1)" font-size="14.22" font-weight="bold" fill="#CACACA">4</text>
<text transform="translate(333.70 701.00) scale(1.1044 1)" font-size="14.22" font-weight="bold" fill="#CACACA">5</text>
<text transform="translate(333.58 730.00) scale(1.1044 1)" font-size="14.22" font-weight="bold" fill="#CACACA">6</text>
<text transform="translate(333.70 759.00) scale(1.1044 1)" font-size="14.22" font-weight="bold" fill="#CACACA">7</text>
<text transform="translate(333.58 788.00) scale(1.1044 1)" font-size="14.22" font-weight="bold" fill="#CACACA">8</text>
<text transform="translate(333.58 817.00) scale(1.1044 1)" font-size="14.22" font-weight="bold" fill="#CACACA">9</text>
<text transform="translate(329.09 846.00) scale(1.1044 1)" font-size="14.22" font-weight="bold" fill="#CACACA">10</text>
<text transform="translate(329.40 875.00) scale(1.1044 1)" font-size="14.22" font-weight="bold" fill="#CACACA">11</text>
<text transform="translate(328.97 904.00) scale(1.1044 1)" font-size="14.22" font-weight="bold" fill="#CACACA">12</text>
<text transform="translate(328.97 933.00) scale(1.1044 1)" font-size="14.22" font-weight="bold" fill="#CACACA">13</text>
<text transform="translate(328.72 962.00) scale(1.1044 1)" font-size="14.22" font-weight="bold" fill="#CACACA">14</text>
<text transform="translate(328.97 991.00) scale(1.1044 1)" font-size="14.22" font-weight="bold" fill="#CACACA">15</text>
<text transform="translate(1527.65 587.00) scale(1.0191 1)" font-size="19.91" fill="#000">21</text>
<text transform="translate(1527.65 645.00) scale(1.0191 1)" font-size="19.91" fill="#000">25</text>
<text transform="translate(1527.65 703.00) scale(1.0191 1)" font-size="19.91" fill="#000">25</text>
<text transform="translate(1527.65 732.00) scale(1.0191 1)" font-size="19.91" fill="#000">25</text>
<text transform="translate(1527.65 761.00) scale(1.0191 1)" font-size="19.91" fill="#000">25</text>
<text transform="translate(1527.65 848.00) scale(1.0191 1)" font-size="19.91" fill="#000">25</text>
<text transform="translate(1527.65 877.00) scale(1.0191 1)" font-size="19.91" fill="#000">25</text>
<text transform="translate(1527.65 906.00) scale(1.0191 1)" font-size="19.91" fill="#000">25</text>
<text transform="translate(1527.65 935.00) scale(1.0191 1)" font-size="19.91" fill="#000">25</text>
<text transform="translate(1527.65 964.00) scale(1.0191 1)" font-size="19.91" fill="#000">25</text>
<text transform="translate(1527.65 993.00) scale(1.0191 1)" font-size="19.91" fill="#000">25</text>
<text transform="translate(573.13 703.00) scale(1.0191 1)" font-size="19.91" fill="#000">1</text>
<text transform="translate(693.13 703.00) scale(1.0191 1)" font-size="19.91" fill="#000">1</text>
<text transform="translate(813.13 703.00) scale(1.0191 1)" font-size="19.91" fill="#000">1</text>
<text transform="translate(1173.13 703.00) scale(1.0191 1)" font-size="19.91" fill="#000">1</text>
<text transform="translate(1293.13 703.00) scale(1.0191 1)" font-size="19.91" fill="#000">1</text>
<text transform="translate(1653.13 703.00) scale(1.0191 1)" font-size="19.91" fill="#000">1</text></g>
</g>
<rect x="1479" y="564" width="121" height="30" fill="none" stroke="#217346" stroke-width="2" shape-rendering="crispEdges"/>
<rect x="1480.5" y="565.5" width="118" height="27" fill="none" stroke="#fff" stroke-width="1" shape-rendering="crispEdges"/>
<rect x="1594" y="588" width="9" height="9" fill="#fff" shape-rendering="crispEdges" />
<rect x="1595" y="589" width="7" height="7" fill="#217346" shape-rendering="crispEdges" />
<rect x="1601.5" y="595.5" width="27" height="27" fill="#fff" stroke="#BDBDBD"/>
<rect x="1604.5" y="600.5" width="15" height="4" fill="#fff" stroke="#4A90E2" stroke-width="1"/>
<polygon points="1621,602 1624.5,602 1621,605" fill="#F0C000"/>
<polygon points="1611.5,606.2 1619.7,606.2 1617.5,608.3 1625,608.3 1621.5,611 1606.2,617.8 1611.5,611.8 1607,611.8" fill="#F3CA3A"/>
<rect x="1890" y="310" width="27" height="687" fill="#F0F0F0" shape-rendering="crispEdges" />
<rect x="1892.5" y="287.5" width="24" height="24" fill="#fff" stroke="#C6C6C6"/>
<polygon points="1899,302 1910,302 1904.5,296" fill="#777"/>
<rect x="1892.5" y="312.5" width="24" height="25" fill="#fff" stroke="#ABABAB"/>
<rect x="1892.5" y="974.5" width="24" height="24" fill="#fff" stroke="#C6C6C6"/>
<polygon points="1899,984 1910,984 1904.5,990" fill="#777"/>
<rect x="0" y="997" width="1920" height="34" fill="#F3F3F3" shape-rendering="crispEdges" />
<rect x="0" y="997" width="1890" height="1" fill="#ABABAB" shape-rendering="crispEdges" />
<polygon points="35.6,1008 35.6,1019 29,1013.5" fill="#BDBDBD"/>
<polygon points="63.7,1008 63.7,1019 70.3,1013.5" fill="#217346"/>
<rect x="118" y="1001" width="1" height="26" fill="#BDBDBD" shape-rendering="crispEdges" />
<rect x="211" y="1001" width="1" height="26" fill="#BDBDBD" shape-rendering="crispEdges" />
<rect x="263" y="1001" width="1" height="26" fill="#BDBDBD" shape-rendering="crispEdges" />
<rect x="342" y="1001" width="1" height="26" fill="#BDBDBD" shape-rendering="crispEdges" />
<rect x="454" y="1001" width="1" height="26" fill="#BDBDBD" shape-rendering="crispEdges" />
<rect x="585" y="1001" width="1" height="26" fill="#BDBDBD" shape-rendering="crispEdges" />
<rect x="670" y="1001" width="1" height="26" fill="#BDBDBD" shape-rendering="crispEdges" />
<rect x="855" y="1001" width="1" height="26" fill="#BDBDBD" shape-rendering="crispEdges" />
<rect x="1189" y="1001" width="1" height="26" fill="#BDBDBD" shape-rendering="crispEdges" />
<rect x="1304" y="1001" width="1" height="26" fill="#BDBDBD" shape-rendering="crispEdges" />
<rect x="1434" y="1001" width="1" height="26" fill="#BDBDBD" shape-rendering="crispEdges" />
<rect x="1499" y="1001" width="1" height="26" fill="#BDBDBD" shape-rendering="crispEdges" />
<rect x="930" y="997" width="124" height="31" fill="#fff" shape-rendering="crispEdges" />
<rect x="930" y="997" width="1" height="30" fill="#ABABAB" shape-rendering="crispEdges" />
<rect x="1053" y="997" width="1" height="30" fill="#ABABAB" shape-rendering="crispEdges" />
<rect x="930" y="1026" width="124" height="2" fill="#217346" shape-rendering="crispEdges" />
<rect x="1535" y="1015.5" width="3" height="3" fill="#217346" shape-rendering="crispEdges" />
<rect x="1541" y="1015.5" width="3" height="3" fill="#217346" shape-rendering="crispEdges" />
<rect x="1547" y="1015.5" width="3" height="3" fill="#217346" shape-rendering="crispEdges" />
<circle cx="1576" cy="1014" r="10.5" fill="none" stroke="#777" stroke-width="1.3"/><path d="M1570 1014 H1582 M1576 1008 V1020" stroke="#777" stroke-width="1.5"/>
<rect x="1609" y="1008.5" width="3" height="3" fill="#A8A8A8" shape-rendering="crispEdges" />
<rect x="1609" y="1013" width="3" height="3" fill="#A8A8A8" shape-rendering="crispEdges" />
<rect x="1609" y="1017.5" width="3" height="3" fill="#A8A8A8" shape-rendering="crispEdges" />
<rect x="1653" y="1001" width="213" height="25" fill="#E8E8E8" shape-rendering="crispEdges" />
<rect x="1629.5" y="1001.5" width="24" height="24" fill="#fff" stroke="#C6C6C6"/>
<polygon points="1644,1008 1644,1019 1638,1013.5" fill="#555"/>
<rect x="1694.5" y="1001.5" width="91" height="24" fill="#fff" stroke="#ABABAB"/>
<rect x="1866.5" y="1001.5" width="24" height="24" fill="#fff" stroke="#C6C6C6"/>
<polygon points="1876,1008 1876,1019 1882,1013.5" fill="#555"/>
<rect x="0" y="1031" width="1920" height="47" fill="#217346" shape-rendering="crispEdges" />
<rect x="0" y="1078" width="1920" height="2" fill="#1B2A22" shape-rendering="crispEdges" />
<rect x="1480" y="1031" width="56" height="47" fill="#19613A" shape-rendering="crispEdges" />
<g fill="none" stroke="#fff" stroke-width="1.2"><rect x="86.5" y="1047.5" width="17" height="16"/></g><g fill="#fff"><rect x="87" y="1047" width="17" height="3"/><rect x="89" y="1054" width="3.5" height="1.2"/><rect x="94" y="1054" width="3.5" height="1.2"/><rect x="99" y="1054" width="3.5" height="1.2"/><rect x="89" y="1057" width="3.5" height="1.2"/><rect x="94" y="1057" width="3.5" height="1.2"/><rect x="99" y="1057" width="3.5" height="1.2"/><rect x="89" y="1060" width="3.5" height="1.2"/><rect x="94" y="1060" width="3.5" height="1.2"/><rect x="99" y="1060" width="3.5" height="1.2"/></g><circle cx="88.5" cy="1049" r="4.8" fill="#E6E6E6"/>
<g fill="none" stroke="#fff" stroke-width="1.2"><rect x="1495" y="1043.5" width="25" height="24.5"/><path d="M1503.3 1043.5 V1068 M1511.6 1043.5 V1068 M1495 1051.7 H1520 M1495 1059.9 H1520"/></g>
<g fill="none" stroke="#fff" stroke-width="1.2"><rect x="1551.5" y="1043.5" width="25" height="24.5"/><rect x="1556.5" y="1047.5" width="15" height="17"/><path d="M1559 1051 H1569 M1559 1054 H1569 M1559 1057 H1569 M1559 1060 H1569" stroke-width="1"/></g>
<g><rect x="1607.5" y="1043.5" width="25" height="24.5" fill="none" stroke="#fff" stroke-width="1.2"/><rect x="1608" y="1044" width="9" height="14" fill="#E6E6E6"/><rect x="1619" y="1044" width="5" height="14" fill="#E6E6E6"/></g>
<rect x="1654" y="1053" width="11" height="3" fill="#fff" shape-rendering="crispEdges" />
<rect x="1670" y="1054" width="150" height="1.2" fill="#fff" shape-rendering="crispEdges" />
<rect x="1741.5" y="1046" width="6.5" height="17" fill="#fff" shape-rendering="crispEdges" />
<rect x="1825.5" y="1053.5" width="13.5" height="3" fill="#fff" shape-rendering="crispEdges" />
<rect x="1830.7" y="1048" width="3" height="14" fill="#fff" shape-rendering="crispEdges" />
<g font-family="Liberation Sans"><text transform="translate(133.50 1019.00) scale(0.9621 1)" font-size="19.91" fill="#444" stroke="#F3F3F3" stroke-width="0.22">Accueil</text>
<text transform="translate(223.57 1019.00) scale(0.9206 1)" font-size="19.91" fill="#444" stroke="#F3F3F3" stroke-width="0.22">BD</text>
<text transform="translate(276.57 1019.00) scale(0.8571 1)" font-size="19.91" fill="#444" stroke="#F3F3F3" stroke-width="0.22">PREVI</text>
<text transform="translate(357.80 1019.00) scale(0.8543 1)" font-size="19.91" fill="#444" stroke="#F3F3F3" stroke-width="0.22">ABSENCE</text>
<text transform="translate(468.95 1019.00) scale(0.8682 1)" font-size="19.91" fill="#444" stroke="#F3F3F3" stroke-width="0.22">HEURE SUP</text>
<text transform="translate(598.29 1019.00) scale(0.9031 1)" font-size="19.91" fill="#444" stroke="#F3F3F3" stroke-width="0.22">PRIME</text>
<text transform="translate(688.84 1019.00) scale(0.9355 1)" font-size="19.91" fill="#444" stroke="#F3F3F3" stroke-width="0.22">IJSS MUT &amp; RTM</text>
<text transform="translate(867.48 1019.00) scale(0.9742 1)" font-size="19.91" fill="#444" stroke="#F3F3F3" stroke-width="0.22">MOIS</text>
<text transform="translate(1068.15 1019.00) scale(0.9351 1)" font-size="19.91" fill="#444" stroke="#F3F3F3" stroke-width="0.22">INDIVIDUEL</text>
<text transform="translate(1204.00 1019.00) scale(0.9236 1)" font-size="19.91" fill="#444" stroke="#F3F3F3" stroke-width="0.22">AVANCES</text>
<text transform="translate(1319.40 1019.00) scale(0.8925 1)" font-size="19.91" fill="#444" stroke="#F3F3F3" stroke-width="0.22">ACOMPTES</text>
<text transform="translate(1448.75 1019.00) scale(0.9493 1)" font-size="19.91" fill="#444" stroke="#F3F3F3" stroke-width="0.22">ATD</text>
<text transform="translate(1513.51 1019.00) scale(0.7859 1)" font-size="19.91" fill="#444" stroke="#F3F3F3" stroke-width="0.22">TI</text>
<text transform="translate(942.21 1019.00) scale(0.9192 1)" font-size="19.91" font-weight="bold" fill="#217346">SYNTHESE</text>
<text transform="translate(12.45 1061.00) scale(0.8573 1)" font-size="15.65" fill="#fff" stroke="#217346" stroke-width="0.2">PRÊT</text>
<text transform="translate(1862.74 1061.40) scale(0.9265 1)" font-size="16.64" fill="#fff" stroke="#217346" stroke-width="0.2">100 %</text></g>
</svg>
</body></html>
